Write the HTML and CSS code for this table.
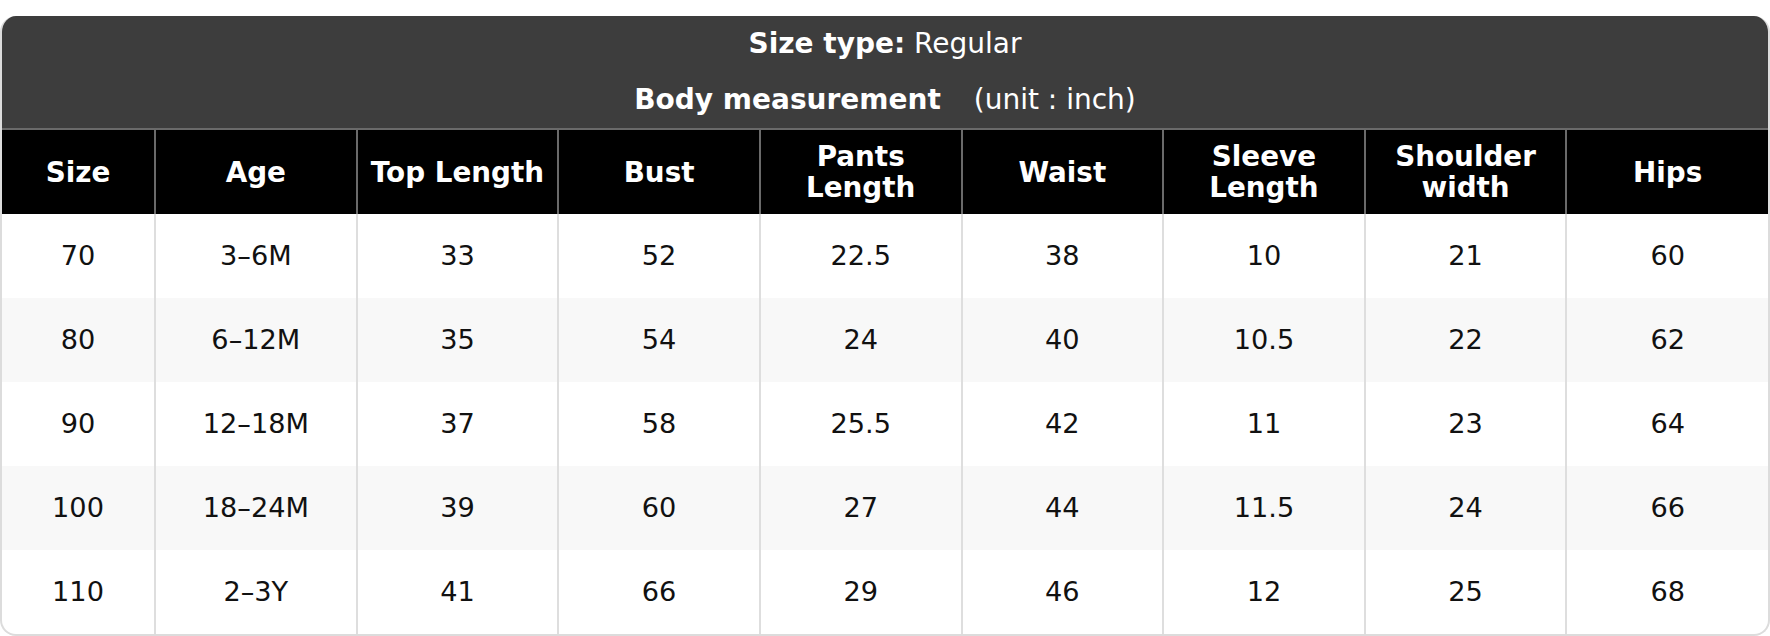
FILE: index.html
```html
<!DOCTYPE html>
<html lang="en">
<head>
<meta charset="utf-8">
<title>Size chart</title>
<link rel="stylesheet" href="styles.css">
</head>
<body>
<div class="card">
  <div class="band">
    <div class="band-line"><strong>Size type:</strong> Regular</div>
    <div class="band-line"><strong>Body measurement</strong> <span class="unit">(unit : inch)</span></div>
  </div>
  <table class="chart">
    <colgroup>
      <col class="col-size">
      <col><col><col><col><col><col><col><col>
    </colgroup>
    <thead>
      <tr>
        <th>Size</th>
        <th>Age</th>
        <th>Top Length</th>
        <th>Bust</th>
        <th>Pants<br>Length</th>
        <th>Waist</th>
        <th>Sleeve<br>Length</th>
        <th>Shoulder<br>width</th>
        <th>Hips</th>
      </tr>
    </thead>
    <tbody>
      <tr><td>70</td><td>3–6M</td><td>33</td><td>52</td><td>22.5</td><td>38</td><td>10</td><td>21</td><td>60</td></tr>
      <tr><td>80</td><td>6–12M</td><td>35</td><td>54</td><td>24</td><td>40</td><td>10.5</td><td>22</td><td>62</td></tr>
      <tr><td>90</td><td>12–18M</td><td>37</td><td>58</td><td>25.5</td><td>42</td><td>11</td><td>23</td><td>64</td></tr>
      <tr><td>100</td><td>18–24M</td><td>39</td><td>60</td><td>27</td><td>44</td><td>11.5</td><td>24</td><td>66</td></tr>
      <tr><td>110</td><td>2–3Y</td><td>41</td><td>66</td><td>29</td><td>46</td><td>12</td><td>25</td><td>68</td></tr>
    </tbody>
  </table>
</div>
</body>
</html>
```

FILE: styles.css
```css
html, body {
  margin: 0;
  padding: 0;
  background: #ffffff;
}

body {
  font-family: "DejaVu Sans", "Liberation Sans", sans-serif;
  font-size: 27.2px;
  color: #111111;
}

.card {
  margin-top: 16px;
  border: 2px solid #dcdcdc;
  border-top: 0;
  border-radius: 16px;
  overflow: hidden;
  background: #ffffff;
}

.band {
  background: #3d3d3d;
  color: #ffffff;
  display: flex;
  flex-direction: column;
  align-items: center;
  gap: 24px;
  padding: 12px 0 12px;
  font-size: 28px;
}

.band-line {
  line-height: 32px;
  white-space: nowrap;
}

.band-line strong {
  font-weight: bold;
}

.unit {
  margin-left: 24px;
}

.chart {
  width: 100%;
  border-collapse: collapse;
  table-layout: fixed;
}

.col-size {
  width: 153px;
}

.chart th {
  background: #000000;
  color: #ffffff;
  font-weight: bold;
  font-size: 27.8px;
  text-align: center;
  vertical-align: middle;
  border: 2px solid #6a6a6a;
  border-bottom: 0;
  padding: 10px 4px;
  height: 64px;
  line-height: 31px;
}

.chart th:first-child {
  border-left: 0;
}

.chart th:last-child {
  border-right: 0;
}

.chart td {
  text-align: center;
  vertical-align: middle;
  border-left: 2px solid #dedede;
  border-right: 2px solid #dedede;
  padding: 0 6px;
  height: 84px;
  line-height: 1.164;
}

.chart td:first-child {
  border-left: 0;
}

.chart td:last-child {
  border-right: 0;
}

.chart tbody tr:nth-child(even) td {
  background: #f8f8f8;
}
```
